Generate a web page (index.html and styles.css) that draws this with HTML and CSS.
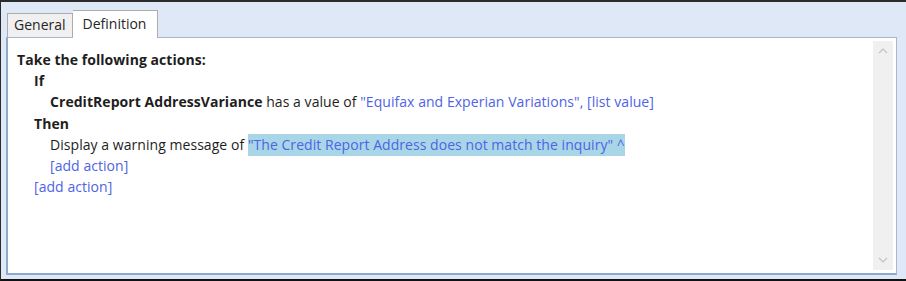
FILE: index.html
```html
<!DOCTYPE html>
<html lang="en">
<head>
    <meta charset="UTF-8">
    <title>Rule Definition</title>
    <link rel="stylesheet" href="styles.css">
</head>
<body>
    <div class="window">
        <!-- Tab strip -->
        <div class="tabs">
            <div class="tab">General</div>
            <div class="tab active">Definition</div>
        </div>

        <!-- Definition panel -->
        <div class="panel">
            <div class="rule">
                <div class="line bold">Take the following actions:</div>
                <div class="line indent-1 bold">If</div>
                <div class="line indent-2">
                    <b>CreditReport AddressVariance</b> has a value of
                    <a href="#" class="link">"Equifax and Experian Variations"</a><span class="link">,</span>
                    <a href="#" class="link">[list value]</a>
                </div>
                <div class="line indent-1 bold">Then</div>
                <div class="line indent-2">
                    Display a warning message of <span class="selected"><a href="#" class="link">"The Credit Report Address does not match the inquiry"</a> <span class="link">^</span></span>
                </div>
                <div class="line indent-2"><a href="#" class="link">[add action]</a></div>
                <div class="line indent-1"><a href="#" class="link">[add action]</a></div>
            </div>

            <div class="scrollbar">
                <svg width="20" height="20" viewBox="0 0 20 20"><path d="M6 12 L10 8 L14 12" fill="none" stroke="#c2c2c2" stroke-width="1.2"/></svg>
                <svg width="20" height="20" viewBox="0 0 20 20"><path d="M6 8 L10 12 L14 8" fill="none" stroke="#c2c2c2" stroke-width="1.2"/></svg>
            </div>
        </div>
    </div>
</body>
</html>
```

FILE: styles.css
```css
* {
    margin: 0;
    padding: 0;
    box-sizing: border-box;
}

body {
    background-color: #dfe8f6;
    font-family: "Segoe UI", "Open Sans", sans-serif;
    font-size: 14px;
    color: #1e1e1e;
}

/* Outer window frame */
.window {
    width: 906px;
    height: 281px;
    border-top: 2px solid #2b2b2b;
    border-left: 1px solid #2b2b2b;
    border-bottom: 2px solid #111;
    padding: 7px 9px 4px 5px;
    display: flex;
    flex-direction: column;
}

/* Tabs */
.tabs {
    display: flex;
    align-items: flex-end;
    padding-left: 1px;
    height: 28px;
}

.tab {
    height: 24px;
    padding: 0 6px;
    line-height: 22px;
    background-color: #f0f0f0;
    border: 1px solid #acacac;
    border-bottom: none;
    color: #262626;
}

.tab.active {
    height: 28px;
    padding: 0 11px 0 10px;
    line-height: 26px;
    background-color: #fff;
    border-left: none;
    margin-bottom: -1px;
    position: relative;
    z-index: 1;
}

/* Panel */
.panel {
    flex: 1;
    background-color: #fff;
    border: 1px solid #a6b7ce;
    border-left: 2px solid #8eaacb;
    border-bottom: 2px solid #8eaacb;
    display: flex;
    padding: 3px 3px 3px 0;
}

.rule {
    flex: 1;
    padding: 8px 0 0 9px;
}

.line {
    line-height: 21.2px;
    white-space: nowrap;
    letter-spacing: 0.05px;
}

.bold {
    font-weight: bold;
}

.indent-1 {
    padding-left: 17px;
}

.indent-2 {
    padding-left: 33px;
}

.link {
    color: #4f63e6;
    text-decoration: none;
}

.selected {
    background-color: #a9d6e6;
    padding: 1px 0 2px;
}

/* Scrollbar */
.scrollbar {
    width: 20px;
    background-color: #f0f0f0;
    display: flex;
    flex-direction: column;
    justify-content: space-between;
}
```
